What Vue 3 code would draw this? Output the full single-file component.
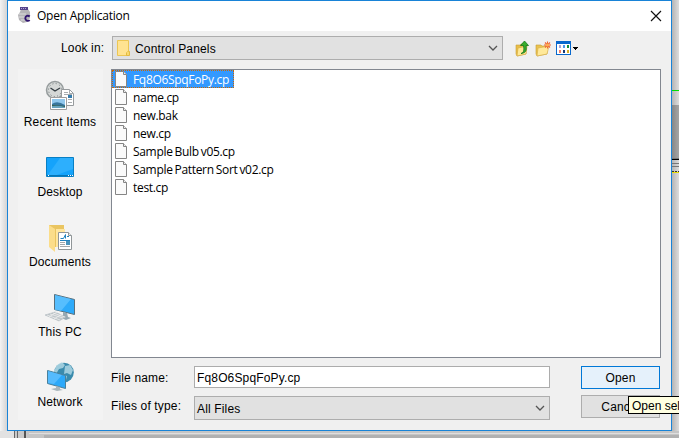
<script setup>
import { ref } from 'vue'

const files = ['Fq8O6SpqFoPy.cp', 'name.cp', 'new.bak', 'new.cp', 'Sample Bulb v05.cp', 'Sample Pattern Sort v02.cp', 'test.cp']
const selected = ref(files[0])
const places = ['Recent Items', 'Desktop', 'Documents', 'This PC', 'Network']
</script>

<template>
  <main class="screen">
    <svg class="backdrop" width="679" height="438" viewBox="0 0 679 438" shape-rendering="crispEdges">
      <defs>
        <linearGradient id="rs" x1="0" x2="1"><stop offset="0" stop-color="#000" stop-opacity=".26" /><stop offset="1" stop-color="#000" stop-opacity=".09" /></linearGradient>
        <linearGradient id="ls" x1="0" x2="1"><stop offset="0" stop-color="#000" stop-opacity="0" /><stop offset="1" stop-color="#000" stop-opacity=".13" /></linearGradient>
      </defs>
      <rect width="679" height="438" fill="#f3f3f3" />
      <rect x="672" y="105" width="7" height="54" fill="#b6b6b6" />
      <rect x="672" width="7" height="438" fill="url(#rs)" />
      <rect width="7" height="438" fill="url(#ls)" />
      <path d="M672 90.5h7" stroke="#00df00" />
      <path d="M672 159.500h7" stroke="#000" />
      <path d="M672 158.500h7M672 163.500h7M672 166.500h7" stroke="#777" />
      <path d="M672 171.500h7" stroke="#333" stroke-dasharray="2 1" />
      <path d="M672 172.500h7" stroke="#e8df00" />
      <rect y="431" width="679" height="7" fill="#c5c5c5" />
      <rect y="431" width="14" height="7" fill="#e2e2e2" />
      <rect x="14" y="431" width="13" height="7" fill="#c9c9c9" />
      <path d="M14.500 430v8M17.500 430v8" stroke="#666" />
      <rect x="24" y="431" width="2" height="7" fill="#555" />
      <path d="M29 433.500h650" stroke="#dedede" />
      <rect x="44" y="435" width="635" height="3" fill="#b1b1b1" />
    </svg>

    <section class="dialog">
      <header class="titlebar">
        <svg class="app-icon" width="17" height="18" viewBox="0 0 17 18">
          <path d="M4 2h7l2 3v6l-3 4-4 1-4-3-1-5 2-3z" fill="#b5b4b7" />
          <path d="M2 7h7M2 10h6M4 13h4" stroke="#dcdcdd" />
          <path d="M3 0h8v3H3z" fill="#56458c" /><path d="M4 1.500h6" stroke="#b4a6d5" stroke-dasharray="1 1" />
          <path d="M12.700 9.500c-1.700-1.500-4.400-.6-4.400 1.800s2.700 3.300 4.400 1.800" fill="none" stroke="#30146e" stroke-width="1.900" />
        </svg>
        <h1>Open Application</h1>
        <svg class="close" width="12" height="12" viewBox="0 0 12 12"><path d="m1 1 10 10M11 1 1 11" stroke="#111" stroke-width="1.150" /></svg>
      </header>

      <div class="lookup">
        <label>Look in:</label>
        <div class="combo directory">
          <svg width="13" height="17" viewBox="0 0 13 17"><path d="M.5.5h11v15H.5z" fill="#ffe391" stroke="#ecc653" /><path d="M10.500 11.500q2-1 2 0v4h-3v-3" fill="#f8d96e" stroke="#e3b940" /></svg>
          <span>Control Panels</span>
          <svg class="chevron" width="10" height="6" viewBox="0 0 10 6"><path d="m1 1 4 4 4-4" /></svg>
        </div>
        <div class="tools">
          <svg width="15" height="17" viewBox="0 0 15 17"><path d="M1 5h4l1-1h5v10l-9 2-1-2z" fill="#e9bd47" stroke="#c7a13d" stroke-width=".6" /><path d="m3 8 9-2-1 8-9 2z" fill="#ffe997" stroke="#d6ad43" stroke-width=".7" /><path d="M6 13.500c3-1 3.200-3.200 2.500-8H5.500L9.500 1l4 4.500H11c.9 5-.2 7.500-5 8" fill="#38ad2d" stroke="#137719" stroke-width=".8" /></svg>
          <svg width="16" height="17" viewBox="0 0 16 17"><path d="M1 5h5l1 1h5v8l-10 2-1-2z" fill="#eac24e" stroke="#c89d37" stroke-width=".6" /><path d="m3 8 11-2-2 8-10 2z" fill="#ffe99a" stroke="#d8b24d" stroke-width=".7" /><path d="M12.500 1.500v7M9 5h7M10 2.500l5 5M15 2.500l-5 5" stroke="#ee6433" stroke-width="1.100" /><circle cx="12.500" cy="5" r="1.600" fill="#ffb04f" /></svg>
          <svg width="23" height="17" viewBox="0 0 23 17" shape-rendering="crispEdges"><path d="M.5 1.500h14v13H.5z" fill="#fff" stroke="#0868cd" /><path d="M0 1h15v3H0z" fill="#0868cd" /><path d="M3 5h2v3H3z" fill="#aaa3d4" /><path d="M7 5h2v3H7z" fill="#4c98eb" /><path d="M11 5h2v3h-2z" fill="#168d35" /><path d="M3 10h2v3H3z" fill="#f47e63" /><path d="M7 10h2v3H7z" fill="#173774" /><path d="M11 10h2v3h-2z" fill="#d8ac26" /><path d="M17 7h5v1h-1v1h-1v1h-1V9h-1V8h-1z" /></svg>
        </div>
      </div>

      <div class="content">
        <nav class="places">
          <button v-for="(place, i) in places" :key="place">
            <svg v-if="i === 0" width="32" height="32" viewBox="0 0 32 32">
              <circle cx="11" cy="10" r="8.500" fill="#d5d8d7" stroke="#969c9d" stroke-width="1.500" /><circle cx="11" cy="10" r="6.500" fill="none" stroke="#737b7d" stroke-dasharray="1 2.400" /><path d="m6.500 8 4.500 3 5-3" fill="none" stroke="#343d43" stroke-width="1.300" />
              <path d="M17.500 9.500h8l4 4v12h-12z" fill="#fff" stroke="#979b9d" /><path d="M25.500 9.500v4h4M20 12.500h4M20 14.500h8M24 17.500h4M24 19.500h4M24 22.500h4" fill="none" stroke="#a8adb0" /><path d="M24 15h4v3h-4z" fill="#347bac" />
              <path d="M6.500 17.500h16v12h-16z" fill="#fff" stroke="#9e9e9e" /><path d="M8 19h13v9H8z" fill="#91c8ed" /><path d="M8 24q5-4 13 1v3H8z" fill="#38759c" /><path d="M8 25q5 0 13 1v2H8z" fill="#325e4e" /><path d="M8 26q7-1 13 1v1H8z" fill="#68a3bd" />
            </svg>
            <svg v-else-if="i === 1" width="32" height="32" viewBox="0 0 32 32"><path d="M2.500 7.500h27v19h-27z" fill="#15a3fb" stroke="#087fc4" /><path d="M16 8h13v11L10 26H3z" fill="#2daffd" /><path d="M3 25.500h26" stroke="#0875b5" /><path d="M4 25.500h1M24 25.500h1M26 25.500h1M28 25.500h1" stroke="#fff" /></svg>
            <svg v-else-if="i === 2" width="32" height="32" viewBox="0 0 32 32"><path d="M5 5h15v22H5z" fill="#eac561" /><path d="M12 9h9v18h-9z" fill="#ffe69f" /><path d="m5 5 6 4v23l-6-5z" fill="#fbdd8a" /><path d="M14.500 12.500h10l3 3v14h-13z" fill="#fff" stroke="#909698" /><path d="M24.500 12.500v3h3" fill="#eee" stroke="#909698" /><path d="M16.500 18.500h3l2-4v4M23 16.500h2M16 20.500h10" fill="none" stroke="#2282be" /><path d="M16 22.500h5M16 24.500h5M16 26.500h10" stroke="#a4a9ac" /><path d="M22 21h4v4h-4z" fill="#4b94bd" /></svg>
            <svg v-else-if="i === 3" width="32" height="32" viewBox="0 0 32 32"><path d="m10.500 4.500 20 5v15l-20-5z" fill="#2daafa" stroke="#58707d" /><path d="m11 5 16 4-10 12-6-1z" fill="#64c4ff" opacity=".75" /><path d="m19 22 4 1 1 4 3 1-5 2-7-3 4-1z" fill="#96a8b2" /><path d="m1 25 10-3 11 5-7 4z" fill="#c0c7cb" stroke="#a9b2b8" stroke-width=".5" /><path d="m3 25 13 5M6 24l13 4M9 23l12 4M5 27l8-5M10 29l8-5" stroke="#f2f2f2" stroke-width=".7" /></svg>
            <svg v-else width="32" height="32" viewBox="0 0 32 32"><circle cx="20" cy="12.500" r="9.800" fill="#3a8bad" /><path d="m13 5 5-3 3 3-2 3-4 1-3 5-2-3zM21 6l5-1 3 5-2 5-4-2-3 1zM17 14l6 2-1 4-5-2z" fill="#b5dbe7" opacity=".8" /><path d="m3.500 10.500 18 5v13l-18-5z" fill="#2ca9fa" stroke="#4a809b" /><path d="m4 11 14 4-8 9-6-1z" fill="#63c2ff" opacity=".75" /><path d="m12 26 4 1v2l3 1-6 1-6-2 5-1z" fill="#a8b6bd" /></svg>
            <span>{{ place }}</span>
          </button>
        </nav>

        <div class="browser">
          <ul class="files">
            <li v-for="file in files" :key="file" :class="{ selected: selected === file }" @click="selected = file">
              <svg width="12" height="16" viewBox="0 0 12 16"><path d="M.5.5h8l3 3v12H.5z" fill="#fafafa" stroke="#858585" /><path d="M8.500.5v3h3" fill="#eee" stroke="#858585" /></svg>
              <span>{{ file }}</span>
            </li>
          </ul>
          <div class="form">
            <div class="labels"><label>File name:</label><label>Files of type:</label></div>
            <div class="fields">
              <div class="filename"><span>{{ selected }}</span></div>
              <div class="combo type"><span>All Files</span><svg class="chevron" width="10" height="6" viewBox="0 0 10 6"><path d="m1 1 4 4 4-4" /></svg></div>
            </div>
            <div class="actions"><button class="open">Open</button><button class="cancel">Cancel</button></div>
          </div>
        </div>
      </div>
    </section>
    <div class="tooltip">Open selected file</div>
  </main>
</template>

<style>
body { margin: 0; overflow: hidden; }
</style>

<style scoped>
* { box-sizing: border-box; }
.screen { position: relative; width: 679px; height: 438px; padding-left: 7px; overflow: hidden; font: 12px/16px "Liberation Sans", Arial, sans-serif; letter-spacing: .15px; color: #000; }
.backdrop { position: absolute; inset: 0; }
.dialog { position: relative; width: 665px; height: 431px; background: #f0f0f0; border: 1px solid #1883d7; }
.titlebar { height: 30px; background: #fff; display: flex; align-items: center; padding: 0 9px; }
.app-icon { margin-right: 3px; }
h1 { flex: 1; margin: 0; font: 12px/16px "Open Sans", sans-serif; letter-spacing: -.25px; }
.lookup { display: flex; height: 38px; padding: 5px 0 0 53px; }
.lookup label { width: 51px; padding-top: 4px; }
.combo { display: flex; align-items: center; height: 24px; border: 1px solid #adadad; background: #e1e1e1; padding: 0 4px 0 2px; }
.directory { width: 391px; padding-left: 4px; }
.directory span { margin-left: 5px; padding-top: 1px; }
.type span { padding-top: 2px; }
.chevron { margin-left: auto; fill: none; stroke: #555; stroke-width: 1.300; }
.tools { display: flex; gap: 5px; padding: 4px 0 0 12px; }
.content { display: flex; padding-left: 10px; gap: 8px; }
.places { width: 85px; height: 351px; background: #f3f3f3; padding-top: 11px; }
.places button { display: flex; flex-direction: column; align-items: center; width: 84px; height: 70px; padding: 0; border: 0; background: transparent; font: inherit; letter-spacing: inherit; color: inherit; }
.places svg { flex: none; }
.places span { margin-top: 2px; }
.browser { width: 550px; }
.files { width: 550px; height: 289px; margin: 0; padding: 0; border: 1px solid #828790; background: #fff; list-style: none; }
li { display: flex; align-items: center; width: max-content; height: 18px; padding: 0 5px 0 3px; gap: 6px; font: 12px/18px "Open Sans", sans-serif; letter-spacing: -.32px; word-spacing: -.8px; }
li span { padding-top: 2px; }
.selected { color: #fff; background: #3399ff; outline: 1px dotted #cc6600; outline-offset: -1px; }
.form { display: flex; padding-top: 8px; }
.labels { width: 83px; display: flex; flex-direction: column; gap: 12px; padding-top: 4px; }
.fields { width: 356px; display: grid; gap: 8px; }
.filename { height: 22px; padding: 3px 2px 1px; border: 1px solid #acacac; background: #fff; }
.actions { padding-left: 31px; display: flex; flex-direction: column; gap: 6px; }
.actions button { width: 79px; height: 23px; padding: 0; border: 1px solid #adadad; background: #e1e1e1; color: #000; font: inherit; letter-spacing: inherit; }
.actions .open { background: #e5f1fb; border-color: #0078d7; }
.tooltip { position: absolute; left: 628px; top: 396px; width: 125px; height: 18px; border: 1px solid #000; background: #ffffe1; padding: 1px 3px; white-space: nowrap; letter-spacing: 0; }
</style>
